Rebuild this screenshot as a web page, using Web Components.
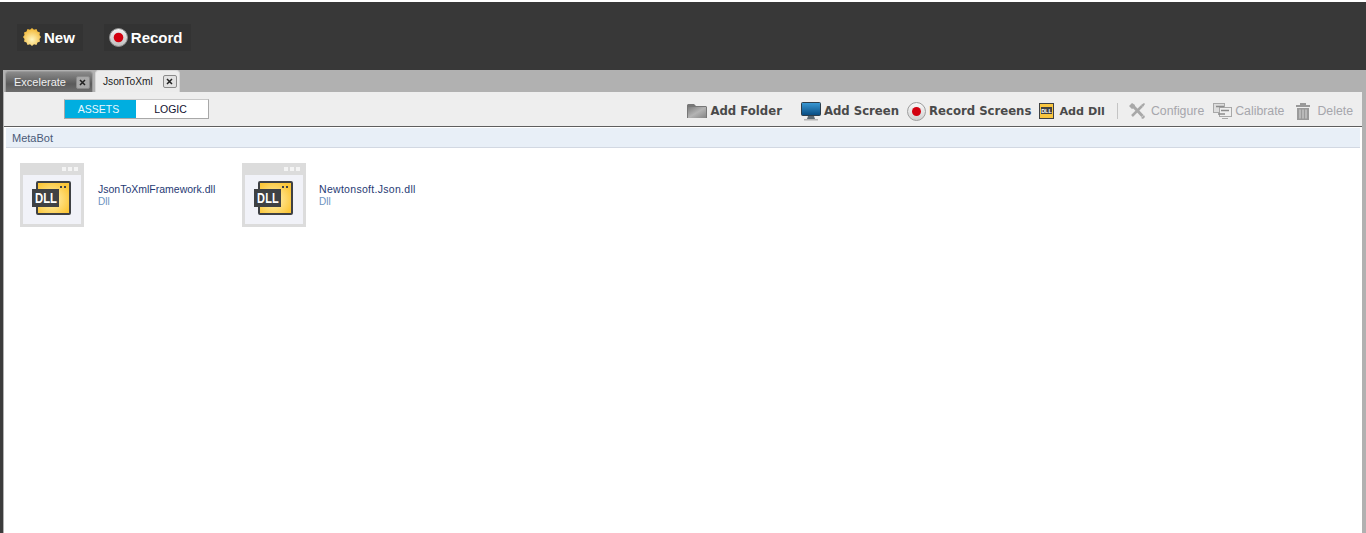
<!DOCTYPE html>
<html>
<head>
<meta charset="utf-8">
<title>MetaBot</title>
<style>
html, body { margin: 0; height: 100%; overflow: hidden; background: #fff; }
body { font-family: "Liberation Sans", Arial, sans-serif; }
</style>
</head>
<body>
<bot-app></bot-app>

<template id="dll-icon">
  <style>
    :host { display: block; width: 64px; height: 64px; flex: none; }
    svg { display: block; }
  </style>
  <svg width="64" height="64" viewBox="0 0 64 64">
    <defs>
      <radialGradient id="y" cx="0.45" cy="0.55" r="0.6">
        <stop offset="0" stop-color="#fff3b8"/>
        <stop offset="1" stop-color="#fcc638"/>
      </radialGradient>
    </defs>
    <rect width="64" height="64" fill="#dcdcdc"/>
    <rect x="3" y="12" width="58" height="49" fill="#f1f2f8"/>
    <rect x="42" y="4" width="4" height="4" fill="#f4f4f4"/>
    <rect x="48" y="4" width="4" height="4" fill="#f4f4f4"/>
    <rect x="54" y="4" width="4" height="4" fill="#f4f4f4"/>
    <rect x="17" y="19" width="33" height="32" rx="1" fill="url(#y)" stroke="#3f4144" stroke-width="2"/>
    <rect x="40" y="23" width="2" height="2" fill="#3f4144"/>
    <rect x="44" y="23" width="2" height="2" fill="#3f4144"/>
    <rect x="12" y="26" width="27" height="18" fill="#3f4144"/>
    <text x="15" y="40" textLength="22" lengthAdjust="spacingAndGlyphs" font-family="'Liberation Sans', sans-serif" font-weight="700" font-size="14" fill="#fff">DLL</text>
  </svg>
</template>

<template id="asset-tile">
  <style>
    :host { display: flex; align-items: center; width: 222px; height: 64px; font-size: 10.5px; }
    .t { margin: 1px 0 0 var(--gap, 14px); line-height: 12px; }
    .n { color: #1f3a74; white-space: nowrap; }
    .k { color: #6a92c0; font-size: 10px; line-height: 14px; letter-spacing: 0; }
  </style>
  <dll-icon></dll-icon>
  <div class="t"><div class="n"><slot></slot></div><div class="k">Dll</div></div>
</template>

<template id="seg-toggle">
  <style>
    :host { display: flex; width: 145px; height: 20px; box-sizing: border-box; border: 1px solid #a8a8a8; border-top-color: #c8c8c8; font-size: 10.5px; background: #fff; }
    div { display: flex; align-items: center; justify-content: center; }
    .on { width: 71px; box-sizing: border-box; padding-right: 4px; background: #00aee0; color: #eaf8ff; }
    .off { flex: 1; padding-right: 3px; color: #101030; }
  </style>
  <div class="on">ASSETS</div><div class="off">LOGIC</div>
</template>

<template id="tool-action">
  <style>
    :host { display: flex; align-items: center; gap: 3px; font: 700 11.7px "DejaVu Sans", Verdana, sans-serif; color: #4a4a4a; white-space: nowrap; }
    :host([off]) { font: 12.3px "Liberation Sans", Arial, sans-serif; color: #a6a6ac; }
    ::slotted(svg) { display: block; flex: none; }
  </style>
  <slot name="icon"></slot><span><slot></slot></span>
</template>

<template id="tab-item">
  <style>
    :host { display: flex; align-items: center; box-sizing: border-box; height: 21px; margin-right: 2px; padding: 0 2px 0 8px; border-radius: 4px 4px 0 0; font-size: 10.5px; color: #f0f0f0; background: linear-gradient(#8b8b8b, #5a5a5a 60%, #6e6e6e); border: 1px solid #9a9a9a; border-bottom: 0; }
    :host([active]) { background: #ececec; color: #222; height: 22px; padding-left: 7px; border-color: #d8d8d8; }
    b { display: flex; align-items: center; justify-content: center; box-sizing: border-box; width: 14px; height: 13px; margin-left: 10px; border: 1px solid #8a8a8a; border-radius: 2px; background: #a8a8a8; }
    :host([active]) b { background: #e2e2e2; }
    svg { display: block; }
  </style>
  <span><slot></slot></span>
  <b><svg width="7" height="7" viewBox="0 0 7 7"><path d="M1 1l5 5M6 1l-5 5" stroke="#222" stroke-width="1.5"/></svg></b>
</template>

<template id="head-button">
  <style>
    :host { display: flex; align-items: center; gap: 3px; height: 27px; padding: 0 8px 0 5px; background: #333; color: #fff; font-weight: 700; font-size: 15px; }
    ::slotted(svg) { display: block; }
  </style>
  <slot name="icon"></slot><span><slot></slot></span>
</template>

<template id="bot-app">
  <style>
    :host { display: flex; flex-direction: column; height: 533px; box-sizing: border-box; padding-top: 2px; background: #fff; }
    header { flex: none; height: 68px; box-sizing: border-box; display: flex; align-items: center; gap: 21px; padding: 2px 0 0 17px; background: #383838; }
    .shell { flex: 1; display: flex; flex-direction: column; background: #b1b1b1; border-left: 3px solid #3c3c3c; }
    nav { flex: none; height: 22px; display: flex; align-items: flex-end; padding-left: 2px; }
    .panel { flex: 1; display: flex; flex-direction: column; margin: 0 4px 0 1px; background: #fff; }
    .bar { flex: none; height: 35px; box-sizing: border-box; display: flex; align-items: center; padding: 0 9px 0 60px; background: #eee; border-bottom: 1px solid #5e5e5e; }
    .acts { margin: 4px 0 0 auto; display: flex; align-items: center; }
    .sep { width: 1px; height: 16px; background: #c4c4c4; margin: 0 11px 0 12px; }
    .crumb { flex: none; height: 20px; box-sizing: border-box; display: flex; align-items: center; padding-left: 6px; background: #e8eff7; border-bottom: 1px solid #d2d8e2; margin: 1px 2px 0 2px; font-size: 11px; color: #4a5a78; }
    .grid { display: flex; padding: 15px 0 0 16px; }
  </style>
  <header>
    <head-button>
      <svg slot="icon" width="18" height="18" viewBox="0 0 18 18" style="margin-left:1px">
        <defs><radialGradient id="s" cx="0.5" cy="0.65" r="0.6"><stop offset="0" stop-color="#fff6c0"/><stop offset="1" stop-color="#f2b93a"/></radialGradient></defs>
        <path fill="url(#s)" d="M9 0l2 1.800 2.500-.8 1 2.500 2.500 1-.5 2.500L18 9l-1.500 2 .5 2.500-2.500 1-1 2.500-2.500-.8L9 18l-2-1.800-2.500.8-1-2.500-2.500-1 .5-2.500L0 9l1.500-2L1 4.500l2.500-1 1-2.500 2.500.8z"/>
      </svg>
      New
    </head-button>
    <head-button>
      <svg slot="icon" width="19" height="19" viewBox="0 0 19 19">
        <defs><linearGradient id="r" x1="0" y1="0" x2="0" y2="1"><stop offset="0" stop-color="#f4f4f4"/><stop offset="1" stop-color="#bdbdbd"/></linearGradient></defs>
        <circle cx="9.500" cy="9.500" r="9" fill="url(#r)" stroke="#8e8e8e"/>
        <circle cx="9.500" cy="9.500" r="4.800" fill="#d2000f"/>
      </svg>
      Record
    </head-button>
  </header>
  <div class="shell">
    <nav>
      <tab-item style="font-size:11px">Excelerate</tab-item>
      <tab-item active style="font-size:10.2px">JsonToXml</tab-item>
    </nav>
    <div class="panel">
      <div class="bar">
        <seg-toggle></seg-toggle>
        <div class="acts">
          <tool-action style="margin-right:19px">
            <svg slot="icon" width="20" height="16" viewBox="0 0 20 16">
              <defs><linearGradient id="f" x1="0" y1="0" x2="1" y2="1"><stop offset="0" stop-color="#7d7d7d"/><stop offset="0.5" stop-color="#b4b4b4"/><stop offset="1" stop-color="#858585"/></linearGradient></defs>
              <path fill="#777" d="M1 1h6l2 2h10l1 1v11H0V2z"/><rect x="1" y="4" width="18" height="11" fill="url(#f)"/>
            </svg>
            Add Folder
          </tool-action>
          <tool-action style="margin-right:8px">
            <svg slot="icon" width="20" height="19" viewBox="0 0 20 19">
              <defs><linearGradient id="m" x1="0" y1="0" x2="0" y2="1"><stop offset="0" stop-color="#3a9ad6"/><stop offset="1" stop-color="#064a80"/></linearGradient></defs>
              <rect x="0.500" y="0.500" width="19" height="13" rx="1" fill="url(#m)" stroke="#2c3e4c"/><path fill="#5b6a74" d="M7 14h6l1 3H6z"/><rect x="3" y="17" width="14" height="1.500" fill="#b4b4b4"/>
            </svg>
            Add Screen
          </tool-action>
          <tool-action style="margin-right:8px">
            <svg slot="icon" width="19" height="19" viewBox="0 0 19 19">
              <defs><linearGradient id="q" x1="0" y1="0" x2="0" y2="1"><stop offset="0" stop-color="#fafafa"/><stop offset="1" stop-color="#cfcfcf"/></linearGradient></defs>
              <circle cx="9.500" cy="9.500" r="9" fill="url(#q)" stroke="#9e9e9e"/><circle cx="9.500" cy="9.500" r="4.500" fill="#d2000f"/>
            </svg>
            Record Screens
          </tool-action>
          <tool-action style="font-size:11.2px">
            <svg slot="icon" width="15" height="16" viewBox="0 0 15 16" style="margin-right:2px"><rect x="0.500" y="0.500" width="14" height="15" fill="#f9c640" stroke="#3f4144"/><rect x="2" y="4" width="11" height="7" fill="#3f4144"/><text x="7.500" y="10" text-anchor="middle" font-family="'Liberation Sans', sans-serif" font-size="5.500" font-weight="700" fill="#fff">DLL</text></svg>
            Add Dll
          </tool-action>
          <div class="sep"></div>
          <tool-action off style="margin-right:9px">
            <svg slot="icon" width="16" height="16" viewBox="0 0 16 16" style="margin-right:3px"><path d="M3 13L13 3" stroke="#a8a8a8" stroke-width="2.500"/><path d="M4 3l9.500 10" stroke="#a8a8a8" stroke-width="3"/><path fill="#a8a8a8" d="M0 3l3-3 3 2-1 3-2 1zM12 2l3-2 1 1-2 3zM12 15l3-3 1 2-2 2z"/></svg>
            Configure
          </tool-action>
          <tool-action off style="margin-right:12px">
            <svg slot="icon" width="19" height="17" viewBox="0 0 19 17"><rect x="0.500" y="0.500" width="11" height="9" fill="#ddd" stroke="#a8a8a8"/><rect x="6.500" y="4.500" width="12" height="9" fill="#eee" stroke="#a8a8a8"/><path d="M3 3.500h8M8 7.500h8M5 11h7" stroke="#8c8c8c" stroke-width="1.500"/><path d="M9 15.500h6" stroke="#a8a8a8"/></svg>
            Calibrate
          </tool-action>
          <tool-action off>
            <svg slot="icon" width="14" height="17" viewBox="0 0 14 17" style="margin-right:4px"><rect x="0" y="2" width="14" height="2" fill="#9a9a9a"/><rect x="4" y="0" width="6" height="2" fill="#9a9a9a"/><path fill="#9a9a9a" d="M1 5h12v12H1z"/><path d="M4 6.500v9M7 6.500v9M10 6.500v9" stroke="#d8d8d8"/></svg>
            Delete
          </tool-action>
        </div>
      </div>
      <div class="crumb">MetaBot</div>
      <div class="grid">
        <asset-tile>JsonToXmlFramework.dll</asset-tile>
        <asset-tile style="letter-spacing:.3px;--gap:13px">Newtonsoft.Json.dll</asset-tile>
      </div>
    </div>
  </div>
</template>

<script>
// each element just clones its template into an open shadow root
function register(name) {
  customElements.define(name, class extends HTMLElement {
    constructor() {
      super();
      const t = document.getElementById(name);
      this.attachShadow({mode: "open"}).appendChild(t.content.cloneNode(true));
    }
  });
}
["dll-icon", "asset-tile", "seg-toggle", "tool-action", "tab-item", "head-button", "bot-app"].forEach(register);
</script>
</body>
</html>
